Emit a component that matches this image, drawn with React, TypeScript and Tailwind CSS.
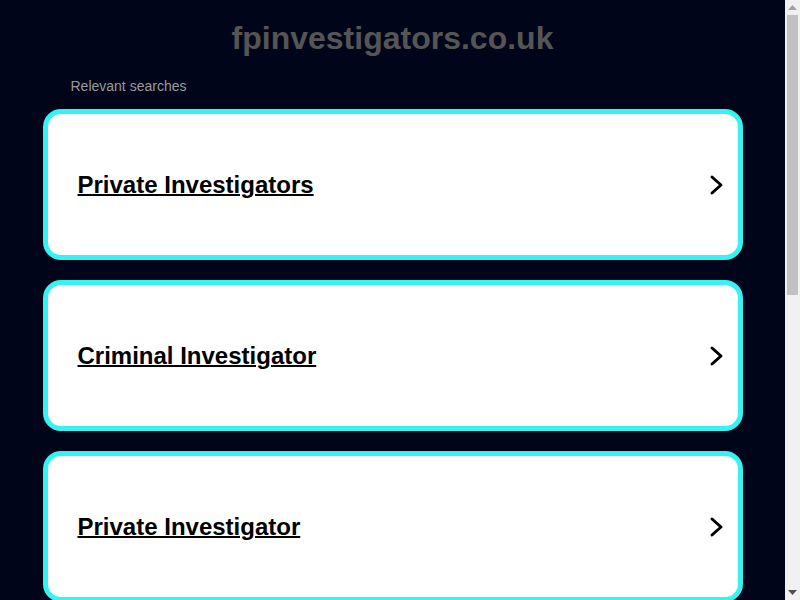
const searches = [
  'Private Investigators',
  'Criminal Investigator',
  'Private Investigator',
  'Detective Agency',
  'Background Check',
];

function Chevron() {
  return (
    <svg width="16" height="22" viewBox="0 0 16 22" fill="none" className="shrink-0">
      <path d="M3 3 L12 11 L3 19" stroke="#000" strokeWidth="3" strokeLinecap="round" strokeLinejoin="round" />
    </svg>
  );
}

// classic browser scrollbar, as in the screenshot
function Scrollbar() {
  return (
    <div className="flex w-[15px] shrink-0 flex-col bg-[#f1f1f1]">
      <div className="flex h-[15px] items-center justify-center">
        <svg width="9" height="5" viewBox="0 0 9 5">
          <path d="M0 5 L4.5 0 L9 5 Z" fill="#a3a3a3" />
        </svg>
      </div>
      <div className="mx-[2px] h-[280px] bg-[#c1c1c1]" />
      <div className="flex-1" />
      <div className="flex h-[15px] items-center justify-center">
        <svg width="9" height="5" viewBox="0 0 9 5">
          <path d="M0 0 L9 0 L4.5 5 Z" fill="#505050" />
        </svg>
      </div>
    </div>
  );
}

export default function App() {
  return (
    <div
      className="flex h-screen overflow-hidden bg-[#01051a]"
      style={{ fontFamily: "'Liberation Sans', Arial, sans-serif" }}
    >
      <div className="min-w-0 flex-1">
        <div className="pt-4 text-center text-[32px] font-bold leading-[44px] text-[#555555]">
          fpinvestigators.co.uk
        </div>
        <div className="mx-auto w-[700px]">
          <div className="mt-4 mb-[13px] px-[28px] text-sm leading-5 text-[#9b9b9b]">Relevant searches</div>
          <div className="flex flex-col gap-5">
            {searches.map((s) => (
              <a
                key={s}
                href="#"
                className="flex h-[151px] shrink-0 items-center justify-between rounded-[18px] border-[5px] border-[#36f3f3] bg-white pl-[30px] pr-[13px]"
              >
                <span className="text-2xl font-bold text-black underline decoration-2">{s}</span>
                <Chevron />
              </a>
            ))}
          </div>
        </div>
      </div>
      <Scrollbar />
    </div>
  );
}
